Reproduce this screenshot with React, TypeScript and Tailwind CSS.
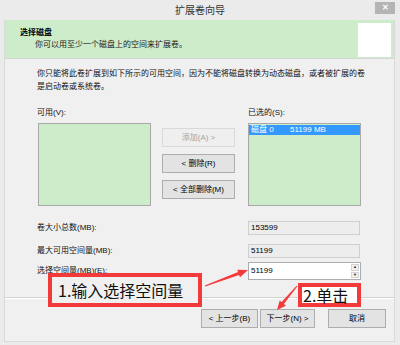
import React from 'react'

const font = { fontFamily: '"Liberation Sans", "Noto Sans CJK SC", sans-serif' }

function Btn({ label, disabled, w }: { label: string; disabled?: boolean; w: string }) {
  return (
    <div
      className={`${w} h-[19px] flex items-center justify-center text-[8px] border ${
        disabled ? 'border-[#d9d9d9] bg-[#efefef] text-[#a3a3a3]' : 'border-[#adadad] bg-[#e3e3e3] text-[#000]'
      }`}
    >
      {label}
    </div>
  )
}

function Field({ value }: { value: string }) {
  return (
    <div className="w-[112px] h-[14px] border border-[#cfcfcf] bg-[#ededed] pl-[2px] flex items-center text-[8px] text-[#000]">
      {value}
    </div>
  )
}

export default function App() {
  return (
    <div className="w-[400px] h-[345px] bg-[#ebebeb] relative overflow-hidden flex flex-col" style={font}>
      {/* title bar */}
      <div className="h-[20px] shrink-0 flex items-center justify-center relative">
        <span className="text-[10px] text-[#333]">扩展卷向导</span>
        <div className="absolute right-[5px] top-[2px] w-[20px] h-[12px] bg-[#b4b4b4] flex items-center justify-center text-white text-[8px] font-bold leading-none">
          ✕
        </div>
      </div>

      {/* window panel */}
      <div className="ml-[4px] w-[391px] h-[322px] border-x border-b border-[#d9d9d9] flex flex-col bg-[#f0f0f0]">
        {/* header */}
        <div className="h-[39px] shrink-0 bg-[#cdecca] border-b border-[#d6d6d6] flex justify-between">
          <div className="pl-[15px] pt-[7px] leading-[12px] text-[8px]">
            <div className="font-bold text-[#000]">选择磁盘</div>
            <div className="pl-[15px] text-[#222]">你可以用至少一个磁盘上的空间来扩展卷。</div>
          </div>
          <div className="w-[33px] h-[34px] bg-white mt-[3px] mr-[3px]" />
        </div>

        {/* body */}
        <div className="h-[239px] shrink-0 border-b border-[#d2d2d2] flex flex-col text-[8px] text-[#111]">
          <div className="ml-[32px] mt-[8px] leading-[13px] w-[340px]">
            <div>你只能将此卷扩展到如下所示的可用空间，因为不能将磁盘转换为动态磁盘，或者被扩展的卷</div>
            <div>是启动卷或系统卷。</div>
          </div>

          <div className="ml-[32px] mt-[13px] leading-[13px] flex">
            <div className="w-[211px]">可用(V):</div>
            <div>已选的(S):</div>
          </div>

          <div className="ml-[33px] mt-[4px] flex">
            <div className="w-[113px] h-[83px] bg-[#cdecca] border border-[#a9a9a9]" />
            <div className="ml-[11px] w-[73px] pt-[5px] flex flex-col gap-[7px]">
              <Btn label="添加(A) >" disabled w="w-[73px]" />
              <Btn label="< 删除(R)" w="w-[73px]" />
              <Btn label="< 全部删除(M)" w="w-[73px]" />
            </div>
            <div className="ml-[13px] w-[113px] h-[83px] bg-[#cdecca] border border-[#a9a9a9] pt-[1px]">
              <div className="h-[10px] bg-[#3399ff] text-white flex items-center pl-[2px]">
                <span className="w-[39px]">磁盘 0</span>
                <span>51199 MB</span>
              </div>
            </div>
          </div>

          <div className="mt-[15px] flex items-center h-[14px]">
            <div className="ml-[32px] w-[211px]">卷大小总数(MB):</div>
            <Field value="153599" />
          </div>
          <div className="mt-[9px] flex items-center h-[14px]">
            <div className="ml-[32px] w-[211px]">最大可用空间量(MB):</div>
            <Field value="51199" />
          </div>
          <div className="mt-[4px] flex items-center h-[18px]">
            <div className="ml-[32px] w-[211px]">选择空间量(MB)(E):</div>
            <div className="w-[113px] h-[18px] border border-[#abadb3] bg-white flex">
              <div className="flex-1 pl-[2px] pt-[2px] text-[8px] text-[#000]">51199</div>
              <div className="w-[10px] flex flex-col gap-[1px] p-[1px]">
                <div className="flex-1 bg-[#f0f0f0] border border-[#d4d4d4] flex items-center justify-center text-[4px] leading-none text-[#222]">
                  ▲
                </div>
                <div className="flex-1 bg-[#f0f0f0] border border-[#d4d4d4] flex items-center justify-center text-[4px] leading-none text-[#222]">
                  ▼
                </div>
              </div>
            </div>
          </div>
        </div>

        {/* footer */}
        <div className="flex-1 border-t border-white flex justify-end items-start pt-[10px] pr-[8px]">
          <Btn label="< 上一步(B)" w="w-[57px]" />
          <div className="ml-[2px]">
            <Btn label="下一步(N) >" w="w-[55px]" />
          </div>
          <div className="ml-[13px]">
            <Btn label="取消" w="w-[58px]" />
          </div>
        </div>
      </div>

      {/* annotations */}
      <div className="absolute left-[48px] top-[273px] w-[154px] h-[34px] border-[4px] border-[#f23a3a] bg-[#f0f0f0] flex items-center pl-[6px]">
        <span className="text-[16px] leading-none text-[#111]" style={{ fontFamily: '"Noto Sans CJK SC", sans-serif' }}>
          1.输入选择空间量
        </span>
      </div>
      <div className="absolute left-[298px] top-[283px] w-[63px] h-[24px] border-[4px] border-[#f23a3a] bg-white flex items-center pl-[1px]">
        <span className="text-[16px] leading-none text-[#111]" style={{ fontFamily: '"Noto Sans CJK SC", sans-serif' }}>
          2.单击
        </span>
      </div>
      <svg className="absolute inset-0 pointer-events-none" width="400" height="345" viewBox="0 0 400 345">
        <polygon
          fill="#f23a3a"
          points="205.2,286.5 239.1,274.9 240,277.2 248,270 237.2,269.8 238.1,272.1 204.8,285.5"
        />
        <polygon
          fill="#f23a3a"
          points="297.4,286.3 283.9,304.1 285.9,305.7 277,310 279.7,300.5 281.6,302.1 296.6,285.7"
        />
      </svg>
    </div>
  )
}
